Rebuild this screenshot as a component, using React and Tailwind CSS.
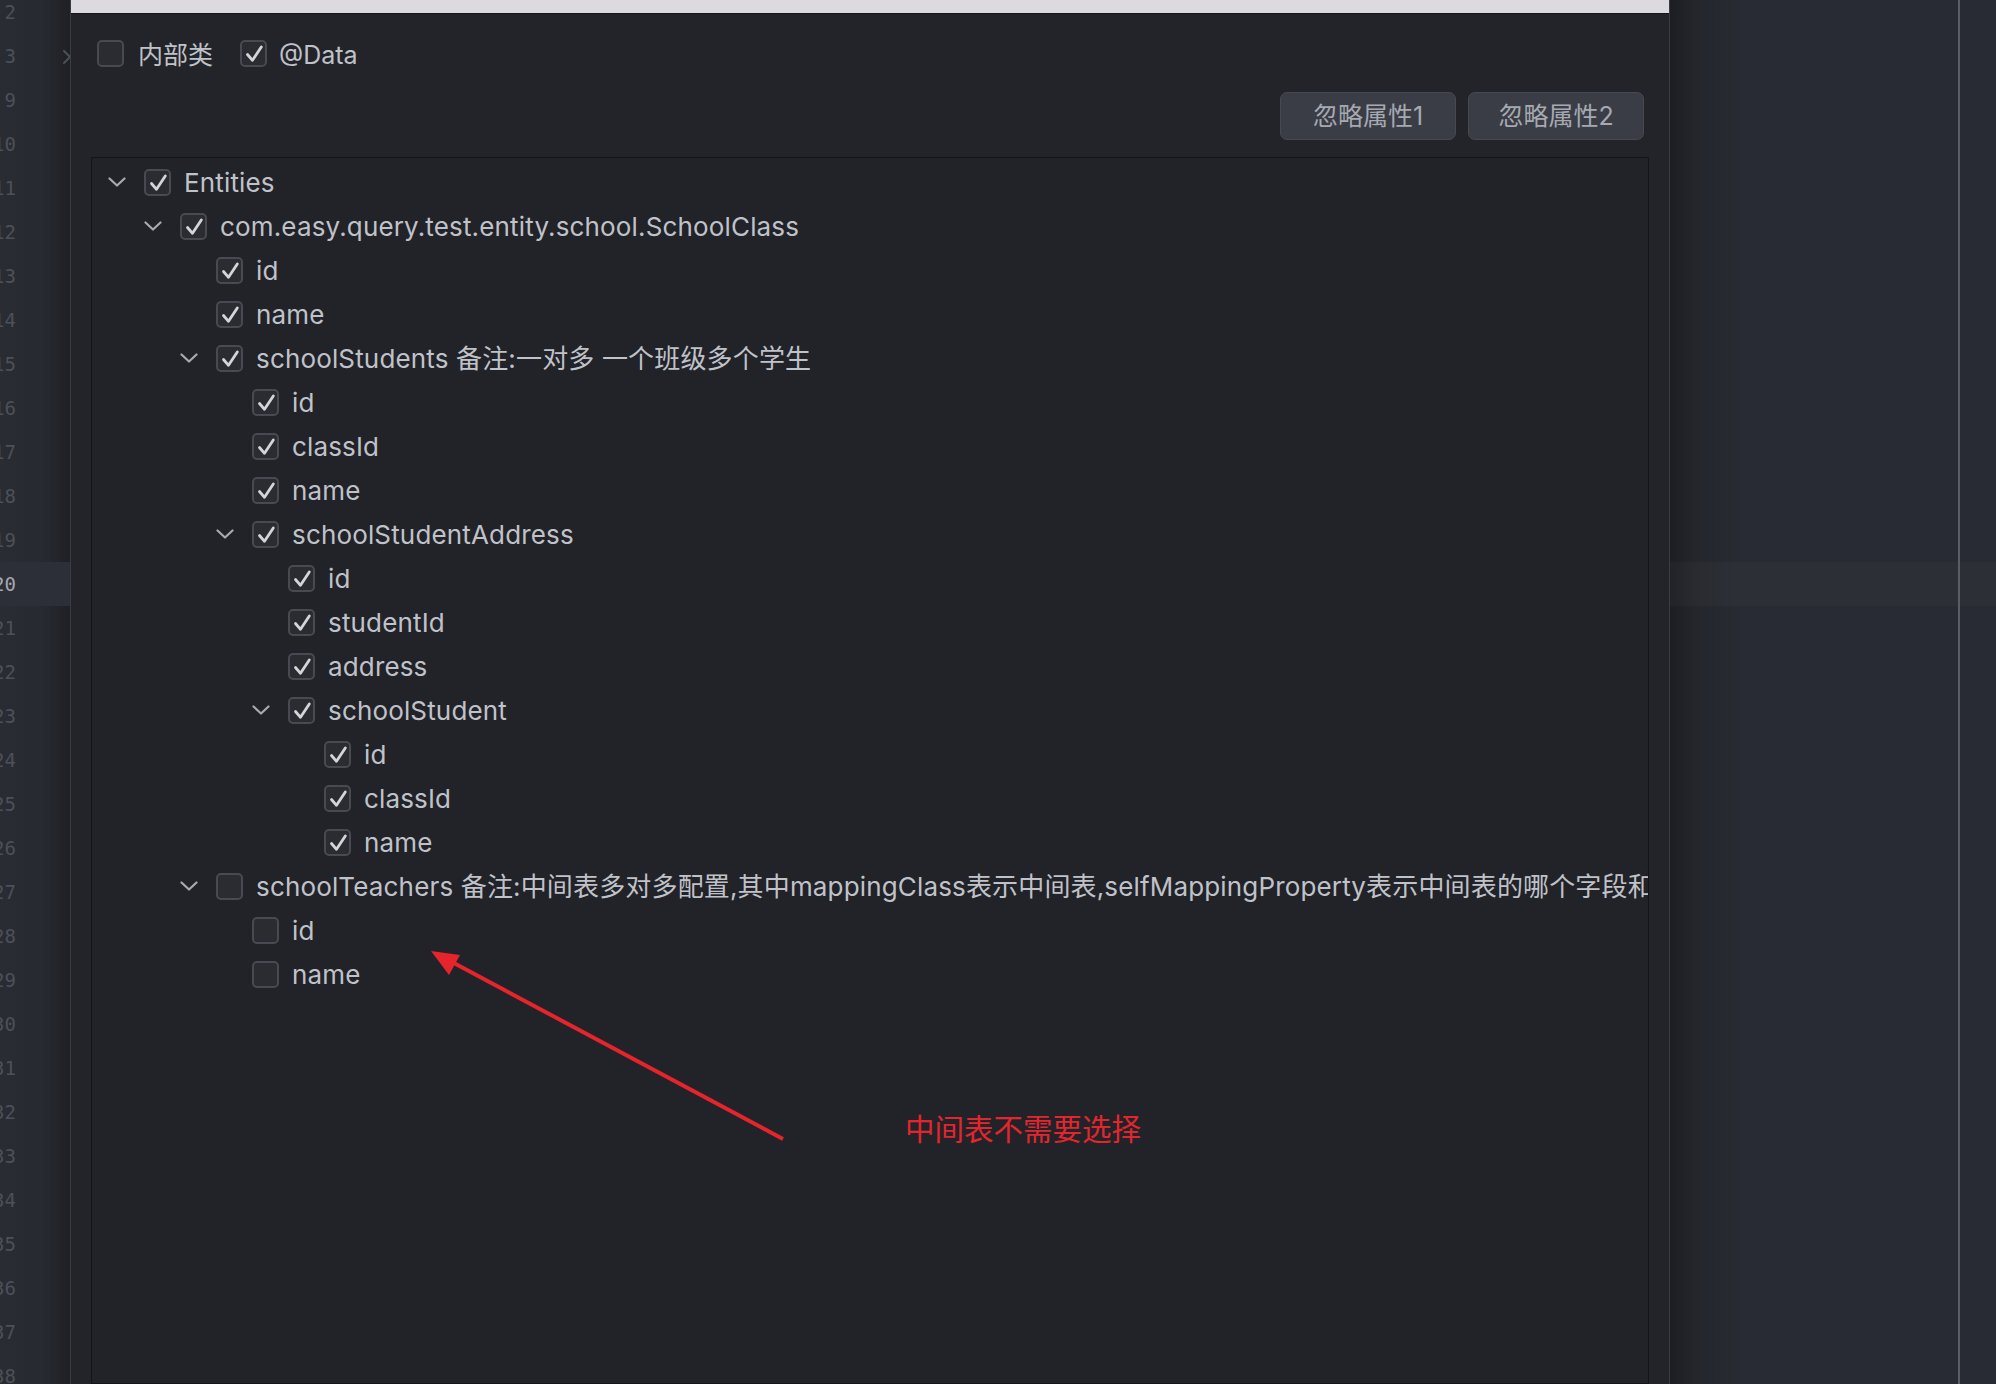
const lines = [2, 3, ...Array.from({ length: 30 }, (_, i) => i + 9)];

const tree = [
  { l: 0, t: "Entities", exp: true, on: true },
  { l: 1, t: "com.easy.query.test.entity.school.SchoolClass", exp: true, on: true },
  { l: 2, t: "id", on: true },
  { l: 2, t: "name", on: true },
  { l: 2, t: "schoolStudents 备注:一对多 一个班级多个学生", exp: true, on: true },
  { l: 3, t: "id", on: true },
  { l: 3, t: "classId", on: true },
  { l: 3, t: "name", on: true },
  { l: 3, t: "schoolStudentAddress", exp: true, on: true },
  { l: 4, t: "id", on: true },
  { l: 4, t: "studentId", on: true },
  { l: 4, t: "address", on: true },
  { l: 4, t: "schoolStudent", exp: true, on: true },
  { l: 5, t: "id", on: true },
  { l: 5, t: "classId", on: true },
  { l: 5, t: "name", on: true },
  {
    l: 2,
    t: "schoolTeachers 备注:中间表多对多配置,其中mappingClass表示中间表,selfMappingProperty表示中间表的哪个字段和当前表对应",
    exp: true,
    on: false,
  },
  { l: 3, t: "id", on: false },
  { l: 3, t: "name", on: false },
];

const indent = ["pl-[16px]", "pl-[52px]", "pl-[88px]", "pl-[124px]", "pl-[160px]", "pl-[196px]"];

function Check({ on }) {
  return (
    <span className="flex h-[27px] w-[27px] shrink-0 items-center justify-center rounded-[5px] border-2 border-[#474a52] bg-[#2a2c31]">
      {on && (
        <svg width="23" height="23" viewBox="0 0 23 23" fill="none">
          <path
            d="M5.5 12.5L10.5 18.3L19.3 5"
            stroke="#d3d5da"
            strokeWidth="2.8"
            strokeLinecap="round"
            strokeLinejoin="round"
          />
        </svg>
      )}
    </span>
  );
}

function Chevron() {
  return (
    <svg width="18" height="10" viewBox="0 0 18 10" fill="none">
      <path d="M1.5 1.5L9 8.5L16.5 1.5" stroke="#a7aab2" strokeWidth="2.2" strokeLinecap="round" strokeLinejoin="round" />
    </svg>
  );
}

export default function App() {
  return (
    <div className="relative flex h-[1384px] w-[1996px] overflow-hidden bg-[#282b33] font-['Inter','Noto_Sans_CJK_SC',sans-serif]">
      {/* editor gutter, line numbers clipped by the dialog */}
      <div className="relative w-[70px] shrink-0 overflow-hidden bg-[linear-gradient(to_right,#292c33,#272a31_42px,#1e2024)]">
        <div className="-mt-[10px] flex flex-col font-['DejaVu_Sans_Mono',monospace] text-[19px]">
          {lines.map((n) => (
            <div
              key={n}
              className={
                n === 20
                  ? "relative flex h-[44px] items-center bg-[#2c2f37] text-[#a4a7af]"
                  : "relative flex h-[44px] items-center text-[#4c5059]"
              }
            >
              <div className="flex w-[16px] justify-end">{n}</div>
              {n === 3 && (
                <svg className="absolute left-[62px] top-[15px]" width="10" height="16" viewBox="0 0 10 16" fill="none">
                  <path d="M2 2L8 8L2 14" stroke="#4c5059" strokeWidth="2" strokeLinecap="round" />
                </svg>
              )}
            </div>
          ))}
        </div>
      </div>

      {/* dialog */}
      <div className="flex w-[1600px] shrink-0 flex-col border-x border-[#393c43] bg-[#222429]">
        <div className="h-[14px] shrink-0 border-b border-[#15161a] bg-[#dcdadf]" />

        <div className="mt-[26px] flex h-[27px] items-center pl-[26px] text-[25px] text-[#c0c2c9]">
          <Check on={false} />
          <span className="ml-[14px] translate-y-[2px]">内部类</span>
          <span className="ml-[27px]">
            <Check on />
          </span>
          <span className="ml-[12px] translate-y-[2px]">@Data</span>
        </div>

        <div className="mt-[25px] flex justify-end gap-[12px] pr-[25px]">
          <button className="h-[48px] w-[176px] rounded-[7px] border border-[#464950] bg-[#3a3d45] pt-[2px] text-[25px] text-[#a6a9b1]">
            忽略属性1
          </button>
          <button className="h-[48px] w-[176px] rounded-[7px] border border-[#464950] bg-[#3a3d45] pt-[2px] text-[25px] text-[#a6a9b1]">
            忽略属性2
          </button>
        </div>

        <div className="mx-[20px] mt-[17px] flex-1 overflow-hidden border border-[#131417] bg-[#212328] pt-[2px]">
          {tree.map((r, i) => (
            <div
              key={i}
              className={`flex h-[44px] items-center whitespace-nowrap text-[26px] tracking-[0.006em] text-[#c0c2c9] ${indent[r.l]}`}
            >
              <span className="flex w-[36px] shrink-0 items-center">{r.exp && <Chevron />}</span>
              <Check on={r.on} />
              <span className="ml-[13px]">{r.t}</span>
            </div>
          ))}
        </div>
      </div>

      {/* editor right side */}
      <div className="relative flex-1 bg-[linear-gradient(to_right,#1d1e22,#24262c_25px,#282b33_75px)]">
        <div className="mt-[562px] h-[44px] bg-white/[0.025]" />
        <div className="absolute left-[288px] top-0 h-full w-[2px] bg-[#5a5d66]" />
      </div>

      {/* annotation */}
      <svg className="pointer-events-none absolute left-0 top-0" width="1996" height="1384">
        <line x1="783" y1="1139" x2="452" y2="962" stroke="#e5242c" strokeWidth="4" />
        <polygon points="431,951 460,955 449,975" fill="#e5242c" />
      </svg>
      <div className="absolute left-[905px] top-[1113px] text-[29.5px] leading-[32px] text-[#e3262e]">
        中间表不需要选择
      </div>
    </div>
  );
}
